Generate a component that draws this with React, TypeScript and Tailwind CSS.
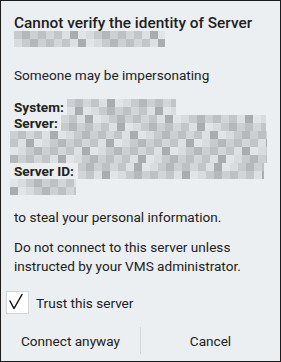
const shades = [
  "#d9dcdf",
  "#ccd0d3",
  "#c3c6c9",
  "#e2e5e8",
  "#b5b8bb",
  "#d3d6d9",
  "#aaadb0",
  "#c8cbce",
  "#bec1c4",
  "#dde0e3",
];

// pixelated redaction block, drawn as a little mosaic
const Mosaic = ({ w, h, seed, cell = 8 }: { w: number; h: number; seed: number; cell?: number }) => {
  const cols = Math.ceil(w / cell);
  const rows = Math.ceil(h / cell);
  const cells = [];
  let s = seed * 9301 + 49297;
  for (let r = 0; r < rows; r++) {
    for (let c = 0; c < cols; c++) {
      s = (s * 9301 + 49297) % 233280;
      const shade = shades[s % shades.length];
      cells.push(
        <rect key={`${r}-${c}`} x={c * cell} y={r * cell} width={cell} height={cell} fill={shade} />
      );
    }
  }
  return (
    <svg width={w} height={h} viewBox={`0 0 ${w} ${h}`} className="block shrink-0">
      {cells}
    </svg>
  );
};

export default function App() {
  return (
    <div
      className="w-[281px] h-[362px] border border-[#1c1c1c] bg-[#eceff1] flex flex-col text-[#212121] overflow-hidden"
      style={{ fontFamily: "Roboto, 'Liberation Sans', sans-serif" }}
    >
      <div className="px-[13px] pt-[13px]">
        <h1 className="text-[15.4px] leading-[18px] font-medium whitespace-nowrap">
          Cannot verify the identity of Server
        </h1>
        <div className="mt-[-1px]">
          <Mosaic w={151} h={16} seed={3} />
        </div>

        <p className="mt-[18px] text-[13.6px] leading-[20px]">Someone may be impersonating</p>

        <div className="mt-[14px] text-[13.6px] leading-[16px]">
          <div className="flex items-center whitespace-nowrap">
            <span className="font-bold shrink-0">System:</span>
            <span className="ml-[3px]">
              <Mosaic w={109} h={16} seed={7} />
            </span>
          </div>
          <div className="flex items-center whitespace-nowrap">
            <span className="font-bold shrink-0">Server:</span>
            <span className="ml-[3px]">
              <Mosaic w={205} h={16} seed={11} />
            </span>
          </div>
          <div className="ml-[-4px]">
            <Mosaic w={257} h={32} seed={17} />
          </div>
          <div className="flex items-center whitespace-nowrap">
            <span className="font-bold shrink-0">Server ID:</span>
            <span className="ml-[4px]">
              <Mosaic w={186} h={16} seed={23} />
            </span>
          </div>
          <div className="ml-[-4px]">
            <Mosaic w={66} h={16} seed={29} />
          </div>
        </div>

        <p className="mt-[12px] text-[13.6px] leading-[20px]">to steal your personal information.</p>

        <p className="mt-[11px] text-[13.6px] leading-[19px]">
          Do not connect to this server unless instructed by your VMS administrator.
        </p>
      </div>

      <label className="mt-[15px] pl-[5px] flex items-center gap-[7px] text-[13.6px] leading-[20px]">
        <span className="w-[23px] h-[23px] bg-white border border-[#d4d7da] flex items-center justify-center">
          <svg width="21" height="21" viewBox="0 0 21 21" fill="none">
            <path d="M3 9l4 7.5L15 2.5" stroke="#111" strokeWidth="1.5" strokeLinecap="round" strokeLinejoin="round" />
          </svg>
        </span>
        Trust this server
      </label>

      <div className="mt-[7px] h-[39px] flex items-center text-[13.6px] leading-[20px]">
        <button className="flex-1 h-full flex items-center justify-center">Connect anyway</button>
        <div className="w-px h-[27px] bg-[#d3d6d9]" />
        <button className="flex-1 h-full flex items-center justify-center">Cancel</button>
      </div>
    </div>
  );
}
